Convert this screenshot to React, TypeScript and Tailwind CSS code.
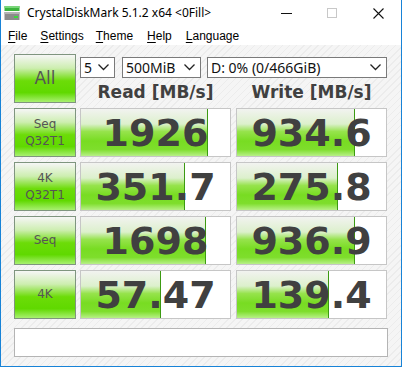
import React from "react";

const BAR_BG =
  "bg-[linear-gradient(180deg,#f2f3f0_0%,#dcf0cc_32%,#96e34c_48%,#78dc22_68%,#7ede2c_86%,#b8f088_100%)]";
const BTN_BG =
  "bg-[linear-gradient(180deg,#f6f6f6_0%,#cdeeb0_28%,#6cdc08_55%,#60d900_80%,#a8f070_100%)]";

function Chevron() {
  return (
    <svg width="11" height="7" viewBox="0 0 11 7" className="shrink-0">
      <polyline points="0.5,0.5 5.5,5.5 10.5,0.5" fill="none" stroke="#222" strokeWidth="1.3" />
    </svg>
  );
}

function Select({ w, label }: { w: string; label: string }) {
  return (
    <div className={`${w} h-[21px] bg-white border border-[#7a7a7a] flex items-center justify-between pl-[3px] pr-[5px] text-[14px] text-[#111]`}>
      <span className="leading-none">{label}</span>
      <Chevron />
    </div>
  );
}

function TestButton({ lines, size = "text-[12px]" }: { lines: string[]; size?: string }) {
  return (
    <div
      className={`w-[62px] h-[49px] shrink-0 border border-[#7f957f] ${BTN_BG} flex flex-col items-center justify-center text-[#555] ${size} leading-[17px]`}
      style={{ fontFamily: '"DejaVu Sans", sans-serif' }}
    >
      {lines.map((l) => (
        <span key={l}>{l}</span>
      ))}
    </div>
  );
}

function Value({ text, frac, cls }: { text: string; frac: number; cls: string }) {
  return (
    <div className={`${cls} w-[151px] h-[49px] shrink-0 border border-[#c6c6c6] bg-white relative overflow-hidden flex items-center justify-center`}>
      <div
        className={`absolute top-0 bottom-0 left-0 ${BAR_BG} border-r border-[#3c9a12]`}
        style={{ width: `${Math.round(frac * 149)}px` }}
      />
      <span
        className="relative text-[38px] font-bold text-[#404040] leading-none"
        style={{ fontFamily: '"DejaVu Sans", sans-serif' }}
      >
        {text}
      </span>
    </div>
  );
}

const rows = [
  { label: ["Seq", "Q32T1"], r: "1926", rf: 0.85, w: "934.6", wf: 0.79 },
  { label: ["4K", "Q32T1"], r: "351.7", rf: 0.7, w: "275.8", wf: 0.68 },
  { label: ["Seq"], r: "1698", rf: 0.84, w: "936.9", wf: 0.79 },
  { label: ["4K"], r: "57.47", rf: 0.54, w: "139.4", wf: 0.62 },
];

function DriveIcon() {
  return (
    <svg width="16" height="16" viewBox="0 0 16 16">
      <rect x="0.5" y="1" width="15" height="5" fill="#3cb43c" />
      <rect x="0.5" y="1" width="15" height="2" fill="#7ad67a" />
      <rect x="0.5" y="7" width="15" height="8" fill="#8c8c8c" />
      <rect x="0.5" y="7" width="15" height="2" fill="#b4b4b4" />
      <rect x="10" y="11" width="4" height="2" fill="#3cd83c" />
    </svg>
  );
}

function MenuItem({ first, rest, ml }: { first: string; rest: string; ml: string }) {
  return (
    <span className={ml}>
      <span className="underline underline-offset-[2px] decoration-[1px]">{first}</span>
      {rest}
    </span>
  );
}

export default function App() {
  return (
    <div
      className="w-[402px] h-[367px] border-x border-b border-[#1883d7] bg-white flex flex-col overflow-hidden"
      style={{ fontFamily: '"Noto Sans", "Open Sans", sans-serif' }}
    >
      {/* Title bar */}
      <div className="h-[26px] shrink-0 flex items-center text-[12px] text-[#000]">
        <div className="ml-[3px]">
          <DriveIcon />
        </div>
        <span className="ml-[7px] leading-none">CrystalDiskMark 5.1.2 x64 &lt;0Fill&gt;</span>
        <div className="ml-auto flex items-center h-full">
          <div className="w-[46px] h-full flex items-center justify-center">
            <div className="w-[11px] h-px bg-[#111]" />
          </div>
          <div className="w-[46px] h-full flex items-center justify-center">
            <div className="w-[10px] h-[10px] border border-[#c8c8c8]" />
          </div>
          <div className="w-[46px] h-full flex items-center justify-center">
            <svg width="11" height="11" viewBox="0 0 11 11">
              <path d="M0.5 0.5 L10.5 10.5 M10.5 0.5 L0.5 10.5" stroke="#111" strokeWidth="1.1" />
            </svg>
          </div>
        </div>
      </div>
      {/* Menu bar */}
      <div
        className="h-[19px] shrink-0 flex items-center text-[12px] text-[#000] pl-[7px] leading-none"
        style={{ fontFamily: '"Liberation Sans", Arial, sans-serif' }}
      >
        <MenuItem first="F" rest="ile" ml="" />
        <MenuItem first="S" rest="ettings" ml="ml-[13px]" />
        <MenuItem first="T" rest="heme" ml="ml-[12px]" />
        <MenuItem first="H" rest="elp" ml="ml-[14px]" />
        <MenuItem first="L" rest="anguage" ml="ml-[14px]" />
      </div>
      {/* Content */}
      <div className="flex-1 bg-[repeating-linear-gradient(135deg,#f5f5f5_0px,#f5f5f5_4px,#ececec_4px,#ececec_5px)] pl-[13px] pt-[9px] flex flex-col">
        <div className="flex">
          <TestButton lines={["All"]} size="text-[17px]" />
          <div className="ml-[4px] flex flex-col">
            <div className="flex mt-[3px]">
              <Select w="w-[35px]" label="5" />
              <div className="ml-[7px]">
                <Select w="w-[79px]" label="500MiB" />
              </div>
              <div className="ml-[6px]">
                <Select w="w-[180px]" label="D: 0% (0/466GiB)" />
              </div>
            </div>
            <div
              className="flex h-[25px] items-center pt-[5px] text-[17px] font-bold text-[#404040]"
              style={{ fontFamily: '"DejaVu Sans", sans-serif' }}
            >
              <div className="w-[151px] text-center">Read [MB/s]</div>
              <div className="w-[151px] ml-[5px] text-center">Write [MB/s]</div>
            </div>
          </div>
        </div>
        <div className="flex flex-col gap-[5px] mt-[5px]">
          {rows.map((row) => (
            <div key={row.r} className="flex">
              <TestButton lines={row.label} />
              <Value text={row.r} frac={row.rf} cls="ml-[4px]" />
              <Value text={row.w} frac={row.wf} cls="ml-[5px]" />
            </div>
          ))}
        </div>
        <div className="mt-[9px] w-[374px] h-[29px] bg-white border border-[#b4b4b4]" />
      </div>
    </div>
  );
}
